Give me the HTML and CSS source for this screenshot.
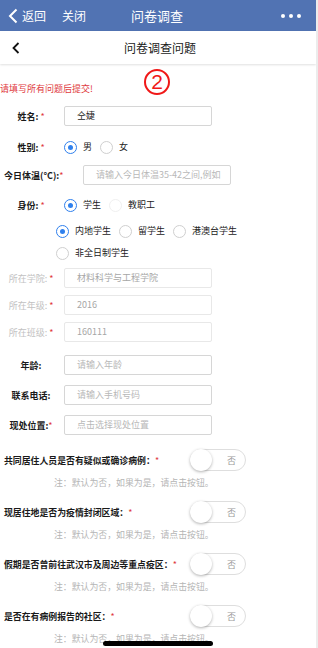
FILE: index.html
```html
<!DOCTYPE html>
<html lang="zh-CN">
<head>
<meta charset="utf-8">
<title>问卷调查</title>
<link rel="stylesheet" href="styles.css">
</head>
<body>
<div class="screen">
  <header class="topbar">
    <div class="tb-left">
      <svg class="tb-back" width="10" height="16" viewBox="0 0 10 16"><path d="M8.5 1.5 L2 8 L8.5 14.5" fill="none" stroke="#fff" stroke-width="2"/></svg>
      <span class="tb-link">返回</span>
      <span class="tb-link tb-close">关闭</span>
    </div>
    <div class="tb-title">问卷调查</div>
    <div class="tb-dots"><i></i><i></i><i></i></div>
  </header>
  <nav class="navbar">
    <svg class="nb-back" width="8" height="12" viewBox="0 0 8 12"><path d="M6.5 1 L1.5 6 L6.5 11" fill="none" stroke="#111" stroke-width="1.8"/></svg>
    <div class="nb-title">问卷调查问题</div>
  </nav>
  <div class="notice">
    <span class="mark">2</span>
    <p class="warn">请填写所有问题后提交!</p>
  </div>
  <div class="form">
    <div class="row row-name">
      <span class="lbl">姓名: <i class="req">*</i></span>
      <div class="input val">仝婕</div>
    </div>
    <div class="row row-gender">
      <span class="lbl">性别: <i class="req">*</i></span>
      <div class="choices">
        <span class="radio on"></span><span class="opt">男</span>
        <span class="radio"></span><span class="opt">女</span>
      </div>
    </div>
    <div class="row row-temp">
      <span class="lbl lbl-temp">今日体温(°C):<i class="req">*</i></span>
      <div class="input ph">请输入今日体温35-42之间,例如</div>
    </div>
    <div class="row row-id">
      <span class="lbl">身份: <i class="req">*</i></span>
      <div class="choices">
        <span class="radio on"></span><span class="opt">学生</span>
        <span class="radio faint"></span><span class="opt">教职工</span>
      </div>
    </div>
    <div class="row sub row-sub1">
      <span class="radio on"></span><span class="opt">内地学生</span>
      <span class="radio"></span><span class="opt">留学生</span>
      <span class="radio"></span><span class="opt">港澳台学生</span>
    </div>
    <div class="row sub row-sub2">
      <span class="radio"></span><span class="opt">非全日制学生</span>
    </div>
    <div class="row row-college">
      <span class="lbl dim">所在学院: <i class="req">*</i></span>
      <div class="input dis">材料科学与工程学院</div>
    </div>
    <div class="row row-grade">
      <span class="lbl dim">所在年级: <i class="req">*</i></span>
      <div class="input dis">2016</div>
    </div>
    <div class="row row-class">
      <span class="lbl dim">所在班级: <i class="req">*</i></span>
      <div class="input dis">160111</div>
    </div>
    <div class="row row-age">
      <span class="lbl">年龄:</span>
      <div class="input ph">请输入年龄</div>
    </div>
    <div class="row row-phone">
      <span class="lbl">联系电话:</span>
      <div class="input ph">请输入手机号码</div>
    </div>
    <div class="row row-loc">
      <span class="lbl">现处位置:<i class="req">*</i></span>
      <div class="input ph">点击选择现处位置</div>
    </div>

    <div class="q q1">
      <div class="q-row">
        <span class="q-lbl">共同居住人员是否有疑似或确诊病例：<i class="req">*</i></span>
        <span class="toggle"><span class="knob"></span><span class="tg-txt">否</span></span>
      </div>
      <p class="note">注：默认为否，如果为是，请点击按钮。</p>
    </div>
    <div class="q">
      <div class="q-row">
        <span class="q-lbl">现居住地是否为疫情封闭区域：<i class="req">*</i></span>
        <span class="toggle"><span class="knob"></span><span class="tg-txt">否</span></span>
      </div>
      <p class="note">注：默认为否，如果为是，请点击按钮。</p>
    </div>
    <div class="q">
      <div class="q-row">
        <span class="q-lbl">假期是否曾前往武汉市及周边等重点疫区：<i class="req">*</i></span>
        <span class="toggle"><span class="knob"></span><span class="tg-txt">否</span></span>
      </div>
      <p class="note">注：默认为否，如果为是，请点击按钮。</p>
    </div>
    <div class="q">
      <div class="q-row">
        <span class="q-lbl">是否在有病例报告的社区：<i class="req">*</i></span>
        <span class="toggle"><span class="knob"></span><span class="tg-txt">否</span></span>
      </div>
      <p class="note">注：默认为否，如果为是，请点击按钮。</p>
    </div>
  </div>
</div>
<div class="home-bar"></div>
</body>
</html>
```

FILE: styles.css
```css
* { box-sizing: border-box; }
html, body {
  margin: 0;
  padding: 0;
  background: #ececec;
  height: 648px;
  overflow: hidden;
}
body {
  font-family: "Noto Sans CJK SC", "Noto Sans", sans-serif;
  color: #222;
}
.screen {
  width: 316px;
  height: 648px;
  background: #fff;
  overflow: hidden;
}

/* top blue bar */
.topbar {
  height: 31px;
  background: #5173b3;
  color: #fff;
  display: flex;
  align-items: center;
  padding: 0 15px 0 8px;
}
.tb-left {
  display: flex;
  align-items: center;
  width: 110px;
}
.tb-back { margin-right: 4px; }
.tb-link {
  font-size: 12px;
  line-height: 16px;
}
.tb-close { margin-left: 16px; }
.tb-title {
  flex: 1;
  text-align: left;
  padding-left: 13px;
  font-size: 13px;
  line-height: 18px;
}
.tb-dots {
  display: flex;
  gap: 4px;
}
.tb-dots i {
  width: 4px;
  height: 4px;
  border-radius: 50%;
  background: #fff;
}

/* white nav bar */
.navbar {
  height: 33px;
  display: flex;
  align-items: center;
  padding-left: 12px;
  box-shadow: 0 1px 2px rgba(0,0,0,0.12);
  background: #fff;
}
.nb-title {
  flex: 1;
  text-align: center;
  font-size: 12px;
  line-height: 16px;
  color: #1a1a1a;
  padding-right: 16px;
}

/* notice */
.notice {
  height: 36px;
  position: relative;
  display: flex;
  align-items: flex-end;
  padding-bottom: 4px;
}
.mark {
  position: absolute;
  left: 144px;
  top: 5px;
  width: 26px;
  height: 26px;
  border: 2px solid #f01818;
  border-radius: 50%;
  color: #f01818;
  font-family: "Liberation Sans", sans-serif;
  font-size: 21px;
  line-height: 22px;
  text-align: center;
}
.warn {
  margin: 0;
  font-size: 9px;
  line-height: 14px;
  color: #e0393e;
}

/* form rows */
.form { display: flex; flex-direction: column; }
.row {
  display: flex;
  align-items: center;
  height: 20px;
}
.lbl {
  width: 62px;
  flex: none;
  text-align: center;
  font-size: 9px;
  font-weight: bold;
  color: #1a1a1a;
  white-space: nowrap;
  margin-right: 2px;
}
.lbl.dim {
  font-weight: normal;
  color: #c2c2c2;
}
.lbl-temp {
  width: 81px;
  text-align: left;
  padding-left: 4px;
}
.req {
  font-style: normal;
  font-weight: normal;
  color: #e0393e;
}
.input {
  width: 148px;
  height: 20px;
  border: 1px solid #d6d6d6;
  border-radius: 2px;
  padding-left: 12px;
  font-size: 9px;
  line-height: 18px;
  white-space: nowrap;
  overflow: hidden;
}
.input.val { color: #222; }
.input.ph { color: #b8b8b8; }
.input.dis { color: #a6a6a6; border-color: #e8e8e8; }

.row-name { margin-top: 6px; }
.row-gender { margin-top: 11px; }
.row-temp { margin-top: 8px; }
.row-id { margin-top: 10px; }
.row-sub1 { margin-top: 6px; }
.row-sub2 { margin-top: 2px; }
.row-college { margin-top: 5px; }
.row-grade { margin-top: 7px; }
.row-class { margin-top: 7px; }
.row-age { margin-top: 13px; }
.row-phone { margin-top: 10px; }
.row-loc { margin-top: 10px; }

.choices { display: flex; align-items: center; }
.sub { padding-left: 56px; }
.radio {
  width: 13px;
  height: 13px;
  border: 1px solid #cfcfcf;
  border-radius: 50%;
  flex: none;
  position: relative;
  background: #fff;
}
.radio.faint { border-color: #f0f0f0; }
.radio.on { border-color: #2f80ed; }
.radio.on::after {
  content: "";
  position: absolute;
  left: 3px;
  top: 3px;
  width: 5px;
  height: 5px;
  border-radius: 50%;
  background: #2f80ed;
}
.opt {
  font-size: 9px;
  line-height: 14px;
  color: #222;
  margin-left: 6px;
  margin-right: 8px;
}

/* yes/no questions */
.q { margin-top: 11px; }
.q1 { margin-top: 14px; }
.q-row {
  display: flex;
  align-items: center;
  height: 22px;
  padding-left: 4px;
}
.q-lbl {
  width: 186px;
  flex: none;
  font-size: 8.9px;
  font-weight: bold;
  color: #1a1a1a;
  white-space: nowrap;
}
.toggle {
  width: 56px;
  height: 22px;
  border: 1px solid #dedede;
  border-radius: 11px;
  position: relative;
  display: flex;
  align-items: center;
  justify-content: flex-end;
  padding-right: 9px;
  background: #fff;
}
.knob {
  position: absolute;
  left: -1px;
  top: -1px;
  width: 22px;
  height: 22px;
  border-radius: 50%;
  background: #fff;
  box-shadow: 0 1px 3px rgba(0,0,0,0.3);
}
.tg-txt {
  font-size: 9px;
  color: #999;
}
.note {
  margin: 5px 0 0;
  padding-left: 54px;
  font-size: 8.9px;
  line-height: 14px;
  color: #b5b5b5;
  white-space: nowrap;
}

.home-bar {
  position: fixed;
  left: 103px;
  bottom: 2px;
  width: 110px;
  height: 5px;
  border-radius: 3px;
  background: #000;
}
```
